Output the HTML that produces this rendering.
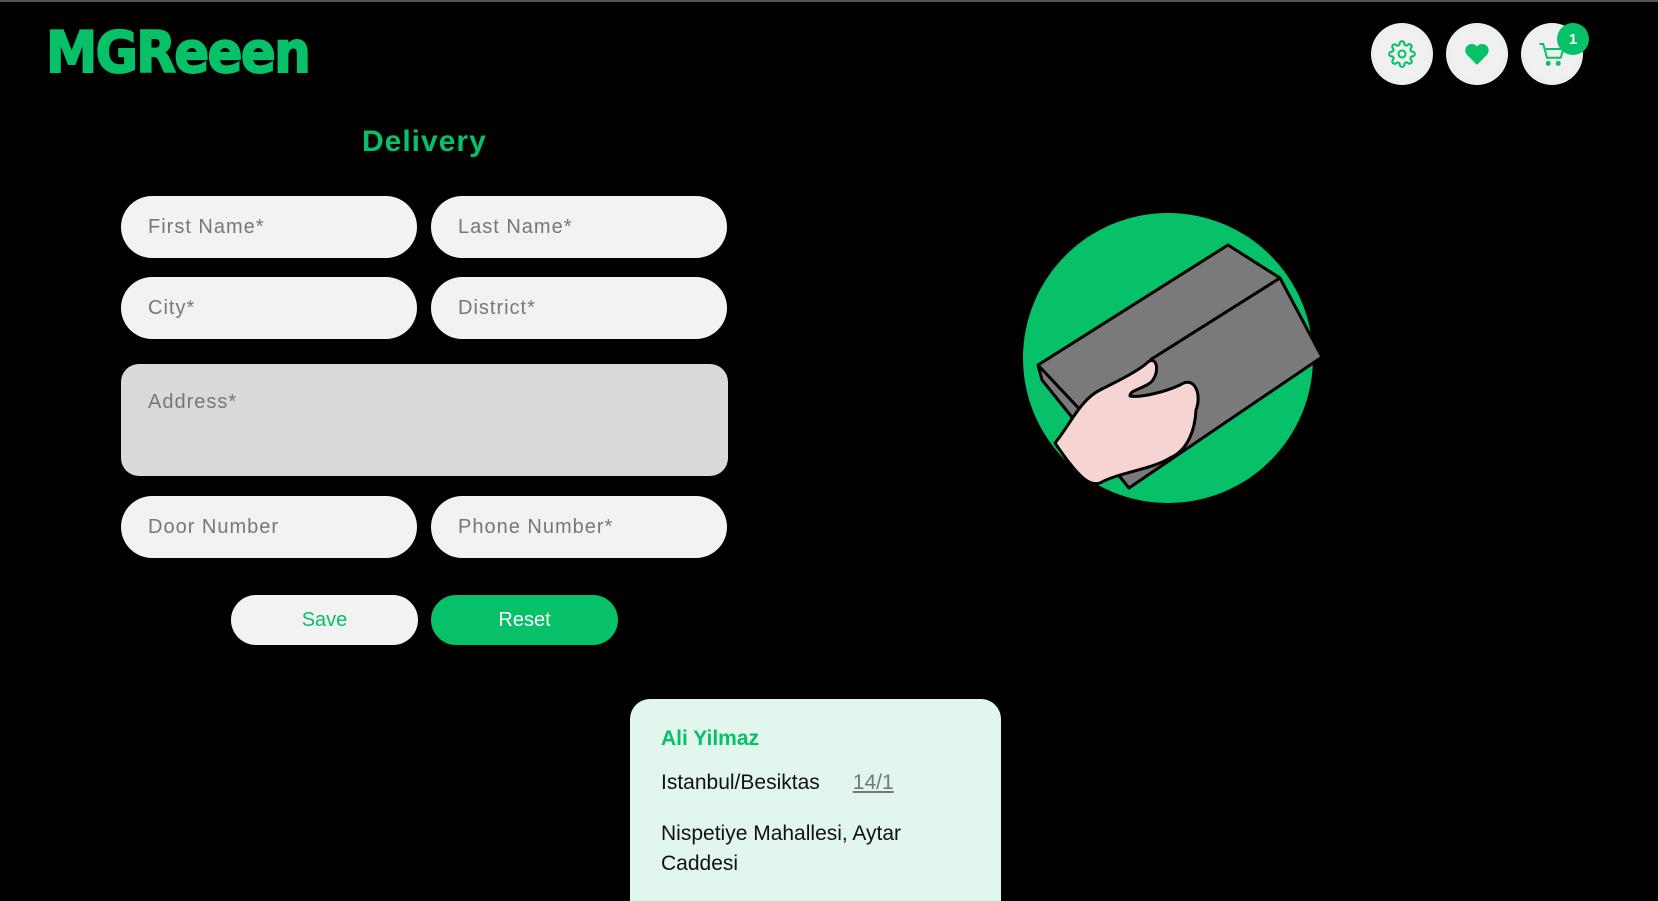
<!DOCTYPE html>
<html style="width:1658px;height:901px;overflow:hidden"><head><meta charset="utf-8"><style>
*{box-sizing:border-box;margin:0;padding:0}
body{width:1658px;height:901px;background:#000;overflow:hidden;position:relative;font-family:"Liberation Sans",Arial,sans-serif;border-top:2px solid #555}
.logo{position:absolute;left:46px;top:16px;font-size:60px;font-weight:900;color:#06c167;letter-spacing:-2px;transform:scale(0.86,0.95);transform-origin:left center;-webkit-text-stroke:2px #06c167;font-family:"DejaVu Sans","Liberation Sans",sans-serif;line-height:70px}
.ic{position:absolute;top:21px;width:62px;height:62px;border-radius:50%;background:radial-gradient(circle,#f0f0f0 55%,#d8f2e3 100%);display:flex;align-items:center;justify-content:center}
.badge{position:absolute;left:1557px;top:21px;width:32px;height:32px;border-radius:50%;background:#06c167;color:#fff;font-weight:bold;font-size:15px;display:flex;align-items:center;justify-content:center}
h1{position:absolute;left:362px;top:123px;font-size:30px;color:#06c167;letter-spacing:1px}
.in{position:absolute;height:62px;width:296px;border-radius:31px;background:#f2f2f2;color:#777;font-size:20px;letter-spacing:1px;padding-left:27px;line-height:62px}
.btn{position:absolute;top:593px;height:50px;width:187px;border-radius:25px;font-size:20px;text-align:center;line-height:50px}
.card{position:absolute;left:630px;top:697px;width:371px;height:204px;background:#e1f6ec;border-radius:20px 20px 0 0;padding:28px 31px;font-size:21px;color:#111;overflow:hidden}
</style></head><body>
<div class="logo">MGReeen</div>
<div class="ic" style="left:1371px"><svg width="28" height="28" viewBox="0 0 24 24" fill="none" stroke="#06c167" stroke-width="1.8"><circle cx="12" cy="12" r="3"/><path d="M19.4 15a1.65 1.65 0 0 0 .33 1.82l.06.06a2 2 0 1 1-2.83 2.83l-.06-.06a1.65 1.65 0 0 0-1.82-.33 1.65 1.65 0 0 0-1 1.51V21a2 2 0 0 1-4 0v-.09A1.65 1.65 0 0 0 9 19.4a1.65 1.65 0 0 0-1.82.33l-.06.06a2 2 0 1 1-2.83-2.83l.06-.06A1.65 1.65 0 0 0 4.6 15a1.65 1.65 0 0 0-1.51-1H3a2 2 0 0 1 0-4h.09A1.65 1.65 0 0 0 4.6 9a1.65 1.65 0 0 0-.33-1.82l-.06-.06a2 2 0 1 1 2.83-2.83l.06.06A1.65 1.65 0 0 0 9 4.6a1.65 1.65 0 0 0 1-1.51V3a2 2 0 0 1 4 0v.09a1.65 1.65 0 0 0 1 1.51 1.65 1.65 0 0 0 1.82-.33l.06-.06a2 2 0 1 1 2.83 2.83l-.06.06A1.65 1.65 0 0 0 19.4 9a1.65 1.65 0 0 0 1.51 1H21a2 2 0 0 1 0 4h-.09a1.65 1.65 0 0 0-1.51 1z"/></svg></div>
<div class="ic" style="left:1446px"><svg width="26" height="24" viewBox="0 0 24 22"><path d="M12 21 2.5 11.5A5.5 5.5 0 0 1 12 4a5.5 5.5 0 0 1 9.5 7.5z" fill="#06c167"/></svg></div>
<div class="ic" style="left:1521px"><svg width="30" height="30" viewBox="0 0 24 24" fill="none" stroke="#06c167" stroke-width="1.6"><path d="M2 4h3l3 11h11l2-7H7"/><circle cx="9" cy="19.5" r="1.2" fill="#06c167"/><circle cx="17" cy="19.5" r="1.2" fill="#06c167"/></svg></div>
<div class="badge">1</div>
<h1>Delivery</h1>
<div class="in" style="left:121px;top:194px">First Name*</div>
<div class="in" style="left:431px;top:194px">Last Name*</div>
<div class="in" style="left:121px;top:275px">City*</div>
<div class="in" style="left:431px;top:275px">District*</div>
<div class="in" style="left:121px;top:362px;width:607px;height:112px;border-radius:18px;background:#d9d9d9;line-height:1;padding-top:28px">Address*</div>
<div class="in" style="left:121px;top:494px">Door Number</div>
<div class="in" style="left:431px;top:494px">Phone Number*</div>
<div class="btn" style="left:231px;background:#f2f2f2;color:#06c167">Save</div>
<div class="btn" style="left:431px;background:#06c167;color:#fff">Reset</div>
<svg style="position:absolute;left:1000px;top:198px" width="340" height="320" viewBox="0 0 340 320">
<circle cx="168" cy="158" r="145" fill="#06c167"/>
<path d="M38 165 228 45 280 78 322 157 129 288 42 180Z" fill="#7a7a7a" stroke="#000" stroke-width="3" stroke-linejoin="round"/>
<path d="M38 165 85 215M280 78 150 160" stroke="#000" stroke-width="3" fill="none"/>
<path d="M55 243C70 225 80 200 100 190C120 180 140 170 148 162C158 155 160 175 150 183C140 190 130 190 130 196C140 198 165 192 180 185C195 175 202 195 196 210C195 230 188 250 170 258C150 270 120 272 100 283C90 286 80 280 55 243Z" fill="#f6d4d2" stroke="#000" stroke-width="3" stroke-linejoin="round"/>
</svg>
<div class="card">
<div style="color:#06c167;font-weight:bold;margin-bottom:20px">Ali Yilmaz</div>
<div style="margin-bottom:24px">Istanbul/Besiktas<span style="margin-left:33px;color:#777;text-decoration:underline">14/1</span></div>
<div style="line-height:30px">Nispetiye Mahallesi, Aytar<br>Caddesi</div>
</div>
</body></html>
